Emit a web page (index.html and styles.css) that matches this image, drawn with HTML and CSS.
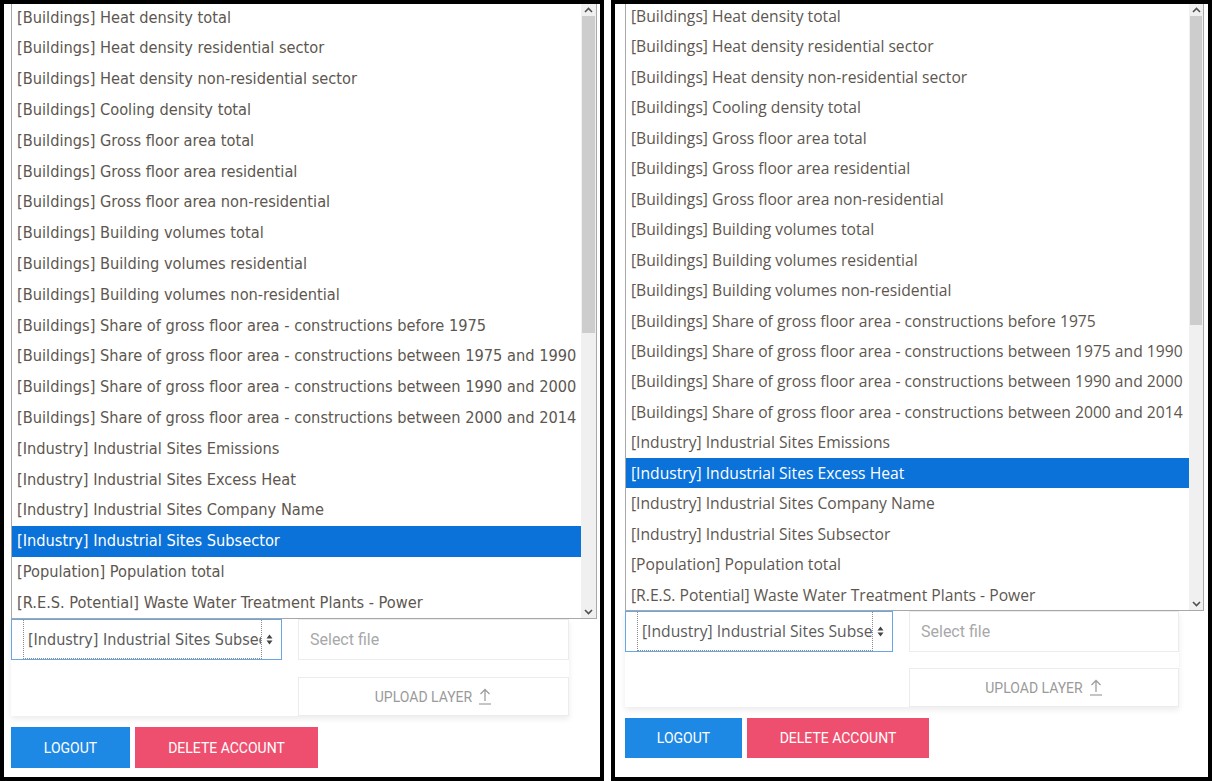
FILE: index.html
```html
<!DOCTYPE html>
<html>
<head>
<meta charset="utf-8">
<link rel="stylesheet" href="styles.css">
</head>
<body>
<div class="screen">
  <section class="panel panel--a">
    <div class="list">
      <div class="list__items">
        <div class="opt">[Buildings] Heat density total</div>
        <div class="opt">[Buildings] Heat density residential sector</div>
        <div class="opt">[Buildings] Heat density non-residential sector</div>
        <div class="opt">[Buildings] Cooling density total</div>
        <div class="opt">[Buildings] Gross floor area total</div>
        <div class="opt">[Buildings] Gross floor area residential</div>
        <div class="opt">[Buildings] Gross floor area non-residential</div>
        <div class="opt">[Buildings] Building volumes total</div>
        <div class="opt">[Buildings] Building volumes residential</div>
        <div class="opt">[Buildings] Building volumes non-residential</div>
        <div class="opt">[Buildings] Share of gross floor area - constructions before 1975</div>
        <div class="opt">[Buildings] Share of gross floor area - constructions between 1975 and 1990</div>
        <div class="opt">[Buildings] Share of gross floor area - constructions between 1990 and 2000</div>
        <div class="opt">[Buildings] Share of gross floor area - constructions between 2000 and 2014</div>
        <div class="opt">[Industry] Industrial Sites Emissions</div>
        <div class="opt">[Industry] Industrial Sites Excess Heat</div>
        <div class="opt">[Industry] Industrial Sites Company Name</div>
        <div class="opt opt--sel">[Industry] Industrial Sites Subsector</div>
        <div class="opt">[Population] Population total</div>
        <div class="opt">[R.E.S. Potential] Waste Water Treatment Plants - Power</div>
      </div>
      <div class="sbar">
        <div class="sbar__btn"><svg width="9" height="6" viewBox="0 0 9 6"><path d="M1 5 L4.5 1.5 L8 5" fill="none" stroke="#505050" stroke-width="1.6"/></svg></div>
        <div class="sbar__track"><div class="sbar__thumb"></div></div>
        <div class="sbar__btn"><svg width="9" height="6" viewBox="0 0 9 6"><path d="M1 1 L4.5 4.5 L8 1" fill="none" stroke="#505050" stroke-width="1.6"/></svg></div>
      </div>
    </div>
    <div class="card">
      <div class="select">
        <div class="select__focus">[Industry] Industrial Sites Subsector</div>
        <svg class="select__arrows" width="7" height="11" viewBox="0 0 7 11"><path d="M3.5 0.5 L6.5 4.5 L0.5 4.5 Z M3.5 10.5 L6.5 6.5 L0.5 6.5 Z" fill="#444"/></svg>
      </div>
      <div class="card__col">
        <div class="file">Select file</div>
        <div class="upload">UPLOAD LAYER
          <svg class="upload__icon" width="14" height="18" viewBox="0 0 14 18"><path d="M7 14 V2.5 M2.5 7 L7 2.5 L11.5 7" fill="none" stroke="#9e9e9e" stroke-width="1.3"/><path d="M1 17 H13" stroke="#9e9e9e" stroke-width="1.2"/></svg>
        </div>
      </div>
    </div>
    <div class="actions">
      <div class="btn btn--blue btn--logout">LOGOUT</div>
      <div class="btn btn--red btn--delete">DELETE ACCOUNT</div>
    </div>
  </section>

  <section class="panel panel--b">
    <div class="list">
      <div class="list__items">
        <div class="opt">[Buildings] Heat density total</div>
        <div class="opt">[Buildings] Heat density residential sector</div>
        <div class="opt">[Buildings] Heat density non-residential sector</div>
        <div class="opt">[Buildings] Cooling density total</div>
        <div class="opt">[Buildings] Gross floor area total</div>
        <div class="opt">[Buildings] Gross floor area residential</div>
        <div class="opt">[Buildings] Gross floor area non-residential</div>
        <div class="opt">[Buildings] Building volumes total</div>
        <div class="opt">[Buildings] Building volumes residential</div>
        <div class="opt">[Buildings] Building volumes non-residential</div>
        <div class="opt">[Buildings] Share of gross floor area - constructions before 1975</div>
        <div class="opt">[Buildings] Share of gross floor area - constructions between 1975 and 1990</div>
        <div class="opt">[Buildings] Share of gross floor area - constructions between 1990 and 2000</div>
        <div class="opt">[Buildings] Share of gross floor area - constructions between 2000 and 2014</div>
        <div class="opt">[Industry] Industrial Sites Emissions</div>
        <div class="opt opt--sel">[Industry] Industrial Sites Excess Heat</div>
        <div class="opt">[Industry] Industrial Sites Company Name</div>
        <div class="opt">[Industry] Industrial Sites Subsector</div>
        <div class="opt">[Population] Population total</div>
        <div class="opt">[R.E.S. Potential] Waste Water Treatment Plants - Power</div>
      </div>
      <div class="sbar">
        <div class="sbar__btn"><svg width="9" height="6" viewBox="0 0 9 6"><path d="M1 5 L4.5 1.5 L8 5" fill="none" stroke="#505050" stroke-width="1.6"/></svg></div>
        <div class="sbar__track"><div class="sbar__thumb"></div></div>
        <div class="sbar__btn"><svg width="9" height="6" viewBox="0 0 9 6"><path d="M1 1 L4.5 4.5 L8 1" fill="none" stroke="#505050" stroke-width="1.6"/></svg></div>
      </div>
    </div>
    <div class="card">
      <div class="select">
        <div class="select__focus">[Industry] Industrial Sites Subsector</div>
        <svg class="select__arrows" width="7" height="11" viewBox="0 0 7 11"><path d="M3.5 0.5 L6.5 4.5 L0.5 4.5 Z M3.5 10.5 L6.5 6.5 L0.5 6.5 Z" fill="#444"/></svg>
      </div>
      <div class="card__col">
        <div class="file">Select file</div>
        <div class="upload">UPLOAD LAYER
          <svg class="upload__icon" width="14" height="18" viewBox="0 0 14 18"><path d="M7 14 V2.5 M2.5 7 L7 2.5 L11.5 7" fill="none" stroke="#9e9e9e" stroke-width="1.3"/><path d="M1 17 H13" stroke="#9e9e9e" stroke-width="1.2"/></svg>
        </div>
      </div>
    </div>
    <div class="actions">
      <div class="btn btn--blue btn--logout">LOGOUT</div>
      <div class="btn btn--red btn--delete">DELETE ACCOUNT</div>
    </div>
  </section>
</div>
</body>
</html>
```

FILE: styles.css
```css
* { box-sizing: border-box; }
html, body { margin: 0; padding: 0; background: #fff; }
body { width: 1212px; height: 781px; overflow: hidden; }

.screen { display: flex; height: 781px; }

.panel {
  height: 781px;
  border: 4px solid #000;
  background: #fff;
  display: flex;
  flex-direction: column;
  overflow: hidden;
}
.panel--a { width: 604px; margin-right: 7px; padding-left: 7px; }
.panel--b { width: 601px; padding-left: 10px; }

/* dropdown list */
.list {
  display: flex;
  border: 1px solid #a9a9a9;
  border-top: none;
  background: #fff;
  overflow: hidden;
  flex: none;
}
.panel--a .list { width: 586px; height: 615px; }
.panel--b .list { width: 579px; height: 607px; }

.list__items { flex: 1; min-width: 0; }
.panel--a .list__items { margin-top: -1.4px; }
.panel--b .list__items { margin-top: -3.2px; }

.opt {
  white-space: nowrap;
  overflow: hidden;
  color: #5d5750;
}
.panel--a .opt {
  height: 30.8px;
  line-height: 30.8px;
  padding-left: 5px;
  font-family: "DejaVu Sans Condensed", "DejaVu Sans", sans-serif;
  font-size: 16.25px;
}
.panel--b .opt {
  height: 30.47px;
  line-height: 30.47px;
  padding-left: 5px;
  font-family: "Open Sans", sans-serif;
  font-size: 15.67px;
}
.opt--sel { background: #0a72d8; color: #fff; }

.sbar {
  display: flex;
  flex-direction: column;
  background: #f0f0f0;
  flex: none;
}
.panel--a .sbar { width: 15px; }
.panel--b .sbar { width: 14px; }
.sbar__btn {
  height: 12px;
  display: flex;
  align-items: center;
  justify-content: center;
  flex: none;
}
.sbar__track { flex: 1; padding: 0 1px; }
.sbar__thumb { background: #cdcdcd; }
.panel--a .sbar__thumb { height: 317px; }
.panel--b .sbar__thumb { height: 309px; }

/* card */
.card {
  display: flex;
  gap: 16px;
  background: #fff;
  box-shadow: 0 3px 6px rgba(0,0,0,0.08);
  flex: none;
}
.panel--a .card { width: 558px; }
.panel--b .card { width: 554px; }

.select {
  display: flex;
  align-items: center;
  border: 1px solid #6aa6e6;
  height: 41px;
  padding-left: 11px;
  padding-right: 8px;
  font-size: 16px;
  color: #5b5b5b;
}
.panel--a .select { width: 271px; font-family: "DejaVu Sans Condensed", "DejaVu Sans", sans-serif; }
.panel--b .select { width: 268px; font-family: "Open Sans", sans-serif; font-size: 15.67px; }
.select__focus {
  flex: 1;
  min-width: 0;
  align-self: stretch;
  display: flex;
  align-items: center;
  border: 1px dotted #8a8a8a;
  border-top: none;
  padding-left: 4px;
  white-space: nowrap;
  overflow: hidden;
}
.select__arrows { flex: none; margin-left: 4px; }

.card__col { display: flex; flex-direction: column; }
.panel--a .card__col { width: 271px; gap: 17px; }
.panel--b .card__col { width: 270px; gap: 16px; }

.file {
  height: 41px;
  border: 1px solid #ececec;
  display: flex;
  align-items: center;
  padding-left: 11px;
  font-family: Roboto, sans-serif;
  font-size: 16px;
  color: #a8a8a8;
}
.upload {
  height: 39px;
  border: 1px solid #ececec;
  display: flex;
  align-items: center;
  justify-content: center;
  gap: 6px;
  font-family: Roboto, sans-serif;
  font-size: 14px;
  color: #9a9a9a;
}
.upload__icon { margin-top: -2px; }

/* buttons */
.actions { display: flex; gap: 5px; margin-top: 11px; }
.btn {
  height: 41px;
  display: flex;
  align-items: center;
  justify-content: center;
  font-family: Roboto, sans-serif;
  font-size: 14px;
  color: #fff;
}
.panel--b .btn { height: 40px; }
.btn--blue { background: #1e88e5; }
.btn--red { background: #ef4f6e; }
.panel--a .btn--logout { width: 119px; }
.panel--a .btn--delete { width: 183px; }
.panel--b .btn--logout { width: 117px; }
.panel--b .btn--delete { width: 182px; }
```
